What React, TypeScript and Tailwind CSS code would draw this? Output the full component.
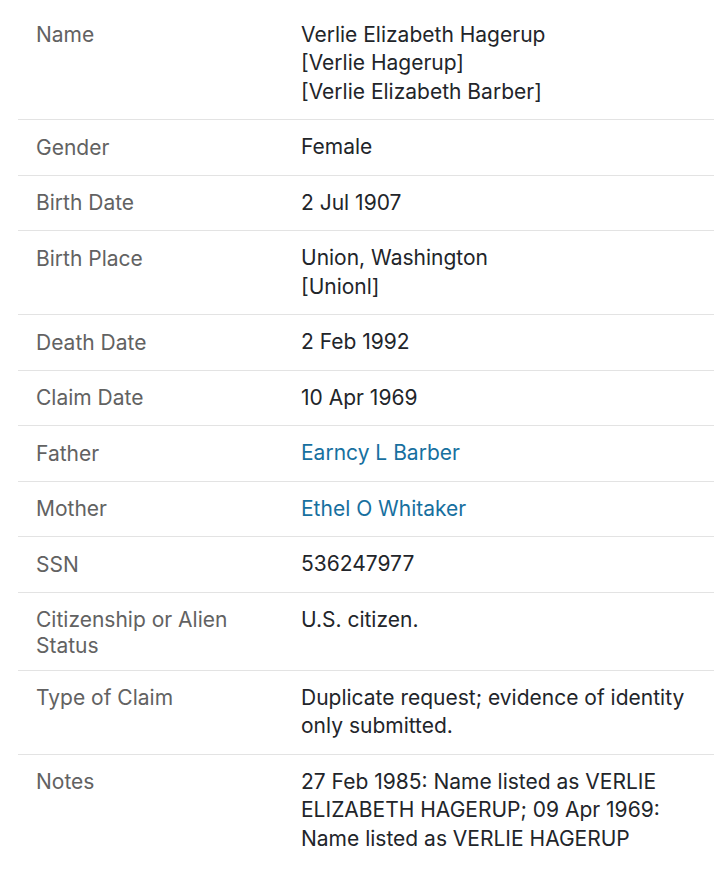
const rows: { label: string; value: string[]; link?: boolean }[] = [
  { label: "Name", value: ["Verlie Elizabeth Hagerup", "[Verlie Hagerup]", "[Verlie Elizabeth Barber]"] },
  { label: "Gender", value: ["Female"] },
  { label: "Birth Date", value: ["2 Jul 1907"] },
  { label: "Birth Place", value: ["Union, Washington", "[Unionl]"] },
  { label: "Death Date", value: ["2 Feb 1992"] },
  { label: "Claim Date", value: ["10 Apr 1969"] },
  { label: "Father", value: ["Earncy L Barber"], link: true },
  { label: "Mother", value: ["Ethel O Whitaker"], link: true },
  { label: "SSN", value: ["536247977"] },
  { label: "Citizenship or Alien Status", value: ["U.S. citizen."] },
  { label: "Type of Claim", value: ["Duplicate request; evidence of identity only submitted."] },
  {
    label: "Notes",
    value: ["27 Feb 1985: Name listed as VERLIE ELIZABETH HAGERUP; 09 Apr 1969: Name listed as VERLIE HAGERUP"],
  },
];

export default function App() {
  return (
    <div className="min-h-screen bg-white pt-[7.5px] pl-[18px] pr-[9px] font-['Inter',sans-serif]">
      <table className="w-full border-collapse">
        <tbody>
          {rows.map((r, i) => (
            <tr key={r.label} className={i < rows.length - 1 ? "border-b border-[#e3e3e3]" : ""}>
              <th className="w-[283px] pl-[18px] pr-[40px] pt-[14.5px] pb-[11.5px] text-left align-top text-[21px] leading-[25.5px] font-normal text-[#626262]">
                {r.label}
              </th>
              <td className="py-[13px] pr-4 align-top text-[21px] leading-[28.5px] text-[#22252a]">
                {r.value.map((v) =>
                  r.link ? (
                    <a key={v} href="#" className="block text-[#17709f]">
                      {v}
                    </a>
                  ) : (
                    <div key={v}>{v}</div>
                  )
                )}
              </td>
            </tr>
          ))}
        </tbody>
      </table>
    </div>
  );
}
